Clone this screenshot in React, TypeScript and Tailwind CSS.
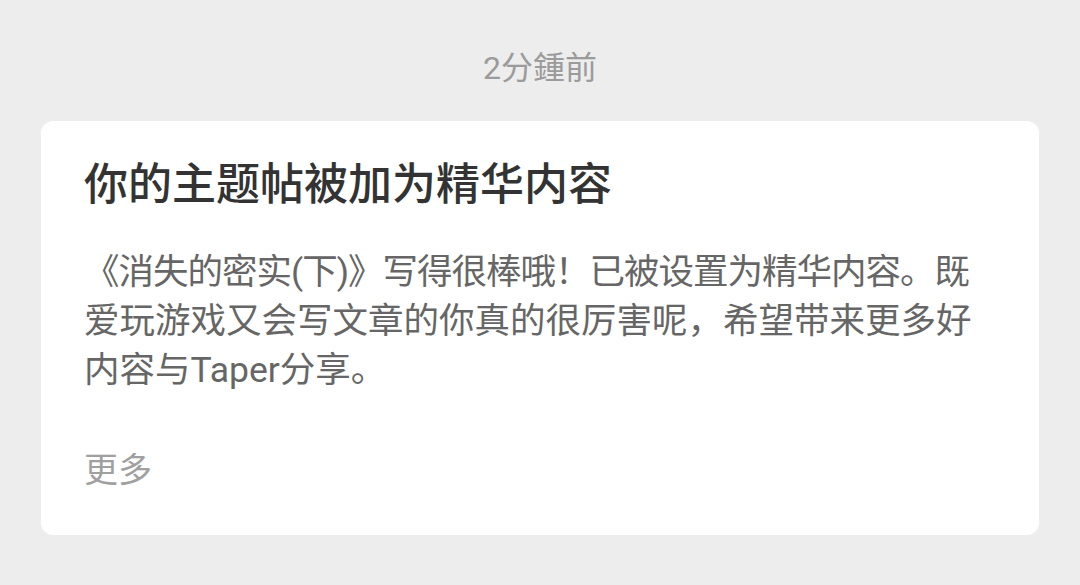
import React from "react";

const font = { fontFamily: '"Roboto", "Noto Sans CJK SC", sans-serif' };

export default function App() {
  return (
    <div className="w-[1080px] h-[585px] bg-[#ededed] px-[41px] pt-[48px]" style={font}>
      {/* time */}
      <div className="text-center text-[32px] leading-[40px] text-[#9b9b9b]">2分鍾前</div>

      {/* notice card */}
      <div className="mt-[33px] bg-white rounded-[12px] pl-[43px] pr-[40px] pt-[36px] pb-[40px]">
        <h1 className="text-[44px] leading-[57px] font-medium text-[#333333]">你的主题帖被加为精华内容</h1>
        <p className="mt-[34px] text-[35.5px] leading-[49px] text-[#666666] whitespace-nowrap">
          <span className="tracking-[-1px]">《消失的密实(下)》写得很棒哦！已被设置为精华内容。既</span>
          <br />
          爱玩游戏又会写文章的你真的很厉害呢，希望带来更多好
          <br />
          内容与Taper分享。
        </p>
        <div className="mt-[51px] text-[34px] leading-[49px] text-[#a0a0a0]">更多</div>
      </div>
    </div>
  );
}
